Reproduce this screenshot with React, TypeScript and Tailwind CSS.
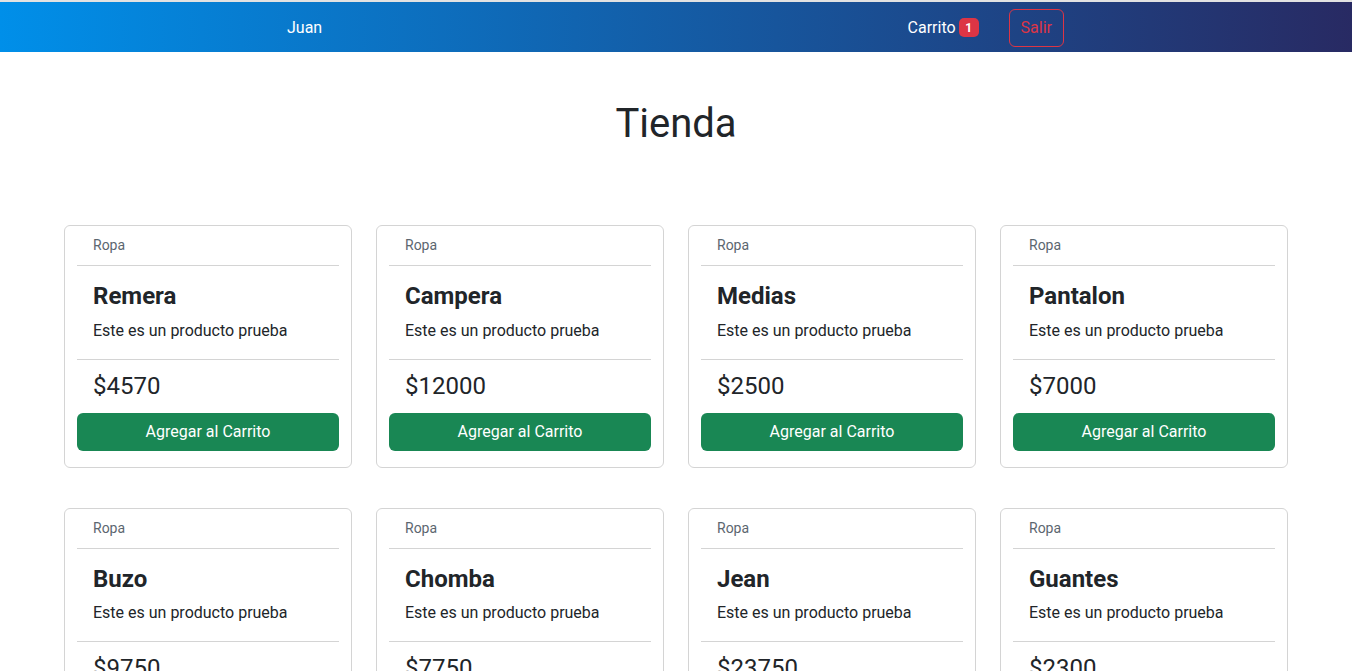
import React from "react";

const products = [
  { name: "Remera", price: 4570 },
  { name: "Campera", price: 12000 },
  { name: "Medias", price: 2500 },
  { name: "Pantalon", price: 7000 },
  { name: "Buzo", price: 9750 },
  { name: "Chomba", price: 7750 },
  { name: "Jean", price: 23750 },
  { name: "Guantes", price: 2300 },
];

function Card({ name, price }: { name: string; price: number }) {
  return (
    <div className="rounded-[6px] border border-[#d4d4d4] bg-white px-[12px] pb-[16px]">
      <div className="flex h-[40px] items-center border-b border-[#d4d4d4] px-[16px] text-[14px] text-[#5c6670]">
        Ropa
      </div>
      <div className="border-b border-[#d4d4d4] p-[16px]">
        <h4 className="mb-[8px] text-[24px] font-bold leading-[1.2] text-[#212529]">{name}</h4>
        <p className="text-[16px] leading-[24px] text-[#212529]">Este es un producto prueba</p>
      </div>
      <div className="px-[16px] pt-[12px] text-[24px] leading-[1.2] text-[#212529]">${price}</div>
      <button className="mt-[12px] flex h-[38px] w-full items-center justify-center rounded-[6px] bg-[#198754] text-[16px] text-white">
        Agregar al Carrito
      </button>
    </div>
  );
}

export default function App() {
  return (
    <div
      className="min-h-screen bg-white text-[#212529]"
      style={{ fontFamily: 'Roboto, "Liberation Sans", Arial, sans-serif' }}
    >
      <div className="h-[2px] bg-[#e2e2e2]" />
      <nav className="flex h-[50px] items-center bg-[linear-gradient(to_right,#008fe9,#282a63)] pl-[287px] pr-[288px] pt-[1px] text-[16px] text-white">
        <span>Juan</span>
        <div className="flex-1" />
        <div className="flex items-center">
          <span>Carrito</span>
          <span className="ml-[3px] flex h-[19px] w-[20px] items-center justify-center rounded-[5px] bg-[#dc3545] text-[12px] font-bold">
            1
          </span>
        </div>
        <button className="ml-[30px] flex h-[38px] items-center rounded-[6px] border border-[#dc3545] px-[11px] text-[#dc3545]">
          Salir
        </button>
      </nav>
      <h1 className="mt-[48px] text-center text-[40px] leading-[1.2]">Tienda</h1>
      <div className="mt-[77px] grid grid-cols-4 gap-x-[24px] gap-y-[40px] px-[64px] pb-[40px]">
        {products.map((p) => (
          <Card key={p.name} {...p} />
        ))}
      </div>
    </div>
  );
}
